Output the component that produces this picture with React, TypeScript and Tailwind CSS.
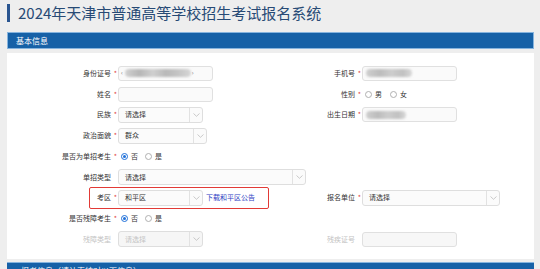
import React from "react";

function Chevron() {
  return (
    <svg width="7" height="4" viewBox="0 0 7 4" fill="none">
      <path d="M0.5 0.5L3.5 3.3L6.5 0.5" stroke="#b5b5b5" strokeWidth="0.7" />
    </svg>
  );
}

function Select({ w, value, disabled }: { w: number; value: string; disabled?: boolean }) {
  return (
    <div
      className={`flex h-[16px] shrink-0 items-center rounded-[3px] border border-[#dedede] ${disabled ? "bg-[#f6f6f6] text-[#c4c4c4]" : "bg-[#fbfbfb] text-[#333]"}`}
      style={{ width: w }}
    >
      <span className="flex-1 pl-[6px] text-[7px] leading-none">{value}</span>
      <span className="flex h-full w-[13px] items-center justify-center border-l border-[#e2e2e2]">
        <Chevron />
      </span>
    </div>
  );
}

function Input({ w = 95, disabled, children }: { w?: number; disabled?: boolean; children?: React.ReactNode }) {
  return (
    <div
      className={`flex h-[15px] shrink-0 items-center rounded-[3px] border border-[#e0e0e0] ${disabled ? "bg-[#f7f7f7]" : "bg-[#fafafa]"}`}
      style={{ width: w }}
    >
      {children}
    </div>
  );
}

function Radio({ label, checked }: { label: string; checked?: boolean }) {
  return (
    <span className="flex items-center gap-[3px]">
      <span
        className={`flex h-[7px] w-[7px] items-center justify-center rounded-full border ${checked ? "border-[#1e6fd9]" : "border-[#b0b0b0]"} bg-white`}
      >
        {checked && <span className="h-[3.5px] w-[3.5px] rounded-full bg-[#1e6fd9]" />}
      </span>
      <span className="text-[7px] leading-none text-[#333]">{label}</span>
    </span>
  );
}

function Field({
  label,
  required,
  disabled,
  children,
}: {
  label: string;
  required?: boolean;
  disabled?: boolean;
  children?: React.ReactNode;
}) {
  return (
    <div className="flex items-center">
      <span className={`mr-[2px] w-[104px] shrink-0 text-right text-[7px] leading-none ${disabled ? "text-[#c4c4c4]" : "text-[#333]"}`}>
        {label}
      </span>
      <span className="w-[5px] shrink-0 text-center text-[7px] leading-none text-[#e0443c]">{required ? "*" : ""}</span>
      {children}
    </div>
  );
}

function Row({ left, right, children }: { left?: React.ReactNode; right?: React.ReactNode; children?: React.ReactNode }) {
  return (
    <div className="relative grid h-[20.75px] grid-cols-[244px_1fr] items-center">
      <div className="relative z-10">{left}</div>
      <div>{right}</div>
      {children}
    </div>
  );
}

function Blur({ w, ml, dark }: { w: number; ml: number; dark?: boolean }) {
  return (
    <div
      className={`block h-[8px] shrink-0 rounded-full blur-[1px] ${dark ? "bg-[linear-gradient(90deg,#d2d2d2,#b6b6b6_22%,#d0d0d0_42%,#b9b9b9_62%,#c6c6c6_82%,#d6d6d6)]" : "bg-[linear-gradient(90deg,#cfcfcf,#bcbcbc_30%,#cdcdcd_55%,#c1c1c1_80%,#d8d8d8)]"}`}
      style={{ width: w, marginLeft: ml }}
    />
  );
}

export default function App() {
  return (
    <div className="h-[269px] w-[540px] overflow-hidden bg-[#eeeeee] pt-[4px] font-['Noto_Sans_CJK_SC','Noto_Sans',sans-serif]">
      <div className="flex h-[18px] items-center pl-[7px]">
        <span className="h-[18px] w-[3px] bg-[#2a5590]" />
        <span className="ml-[8px] text-[15px] leading-[18px] text-[#274a75]">2024年天津市普通高等学校招生考试报名系统</span>
      </div>

      <div className="ml-[7px] mr-[6px] mt-[10px] flex h-[17px] items-center border border-[#86b4de] bg-[#1661a7] pl-[8px] text-[8px] text-white">
        基本信息
      </div>

      <div className="ml-[7px] mr-[6px] mt-[4px] h-[206px] bg-white pt-[10px]">
        <Row
          left={
            <Field label="身份证号" required>
              <Input>
                <span className="ml-[2px] text-[6px] leading-none text-[#777]">‹</span>
                <Blur w={66} ml={2} dark />
                <span className="ml-[1px] text-[6px] leading-none text-[#777]">›</span>
              </Input>
            </Field>
          }
          right={
            <Field label="手机号" required>
              <Input>
                <Blur w={46} ml={3} />
              </Input>
            </Field>
          }
        />
        <Row
          left={
            <Field label="姓名" required>
              <Input />
            </Field>
          }
          right={
            <Field label="性别" required>
              <span className="ml-[3px] flex items-center gap-[8px]">
                <Radio label="男" />
                <Radio label="女" />
              </span>
            </Field>
          }
        />
        <Row
          left={
            <Field label="民族" required>
              <Select w={85} value="请选择" />
            </Field>
          }
          right={
            <Field label="出生日期" required>
              <Input>
                <Blur w={40} ml={3} />
              </Input>
            </Field>
          }
        />
        <Row
          left={
            <Field label="政治面貌" required>
              <Select w={89} value="群众" />
            </Field>
          }
        />
        <Row
          left={
            <Field label="是否为单招考生" required>
              <span className="ml-[3px] flex items-center gap-[7px]">
                <Radio label="否" checked />
                <Radio label="是" />
              </span>
            </Field>
          }
        />
        <Row
          left={
            <Field label="单招类型">
              <Select w={188} value="请选择" />
            </Field>
          }
        />
        <Row
          left={
            <Field label="考区" required>
              <Select w={85} value="和平区" />
              <span className="ml-[3px] whitespace-nowrap text-[7px] leading-none text-[#2f3fc4]">下载和平区公告</span>
            </Field>
          }
          right={
            <Field label="报名单位" required>
              <Select w={138} value="请选择" />
            </Field>
          }
        >
          <div className="pointer-events-none absolute left-[82px] top-[-0.5px] z-20 h-[22px] w-[180px] rounded-[2px] border-[1.5px] border-[#e23a36]" />
        </Row>
        <Row
          left={
            <Field label="是否残障考生" required>
              <span className="ml-[3px] flex items-center gap-[7px]">
                <Radio label="否" checked />
                <Radio label="是" />
              </span>
            </Field>
          }
        />
        <Row
          left={
            <Field label="残障类型" disabled>
              <Select w={85} value="请选择" disabled />
            </Field>
          }
          right={
            <Field label="残疾证号" disabled>
              <Input disabled />
            </Field>
          }
        />
      </div>

      <div className="ml-[7px] mr-[6px] mt-[3px] h-[20px] border-t border-[#86b4de] bg-[#1661a7] pl-[14px] pt-[4px] text-[8px] leading-none text-white">
        报考信息（请认真核对以下信息）
      </div>
    </div>
  );
}
